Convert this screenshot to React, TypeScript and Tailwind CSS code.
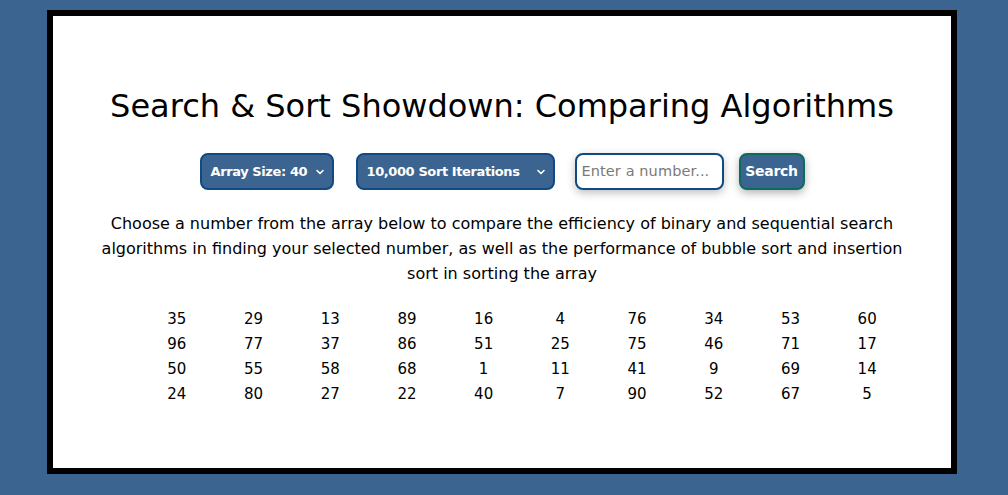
import React from "react";

const nums = [
  35, 29, 13, 89, 16, 4, 76, 34, 53, 60,
  96, 77, 37, 86, 51, 25, 75, 46, 71, 17,
  50, 55, 58, 68, 1, 11, 41, 9, 69, 14,
  24, 80, 27, 22, 40, 7, 90, 52, 67, 5,
];

function Chevron() {
  return (
    <svg width="10" height="10" viewBox="0 0 10 10" fill="none">
      <path d="M2 3.5 L5 6.5 L8 3.5" stroke="white" strokeWidth="1.6" strokeLinecap="round" strokeLinejoin="round" />
    </svg>
  );
}

export default function App() {
  return (
    <div
      className="w-[1008px] h-[495px] bg-[#3b6590] pt-[10px] pl-[47px]"
      style={{ fontFamily: '"DejaVu Sans", "Open Sans", sans-serif' }}
    >
      <div className="w-[910px] h-[464px] border-[6px] border-black bg-white flex flex-col items-center text-black">
        <h1 className="mt-[70px] text-[32px] leading-[40px] font-normal whitespace-nowrap">
          Search &amp; Sort Showdown: Comparing Algorithms
        </h1>
        <div className="mt-[27px] flex items-center h-[37px]">
          <div className="w-[134px] h-[37px] rounded-[8px] border-2 border-[#0f4a82] bg-[#3b6590] text-white font-bold text-[13px] flex items-center justify-between pl-[9px] pr-[7px] tracking-[-0.4px]">
            <span>Array Size: 40</span>
            <Chevron />
          </div>
          <div className="ml-[22px] w-[199px] h-[37px] rounded-[8px] border-2 border-[#0f4a82] bg-[#3b6590] text-white font-bold text-[13px] flex items-center justify-between pl-[9px] pr-[7px] tracking-[-0.4px]">
            <span>10,000 Sort Iterations</span>
            <Chevron />
          </div>
          <div className="ml-[20px] w-[149px] h-[37px] rounded-[8px] border-2 border-[#0f4a82] bg-white flex items-center pl-[5px] text-[14.5px] tracking-[0.1px] text-[#7a7a7a] shadow-[0_3px_8px_rgba(0,0,0,0.25)] whitespace-nowrap overflow-hidden">
            Enter a number...
          </div>
          <div className="ml-[15px] w-[66px] h-[37px] rounded-[8px] border-2 border-[#0d6b5c] bg-[#3b6590] text-white font-bold text-[14px] flex items-center justify-center tracking-[-0.3px] shadow-[0_3px_8px_rgba(0,0,0,0.3)]">
            Search
          </div>
        </div>
        <p className="mt-[21px] w-[840px] text-center text-[16px] leading-[25px] font-normal">
          Choose a number from the array below to compare the efficiency of binary and sequential search
          <br />
          algorithms in finding your selected number, as well as the performance of bubble sort and insertion
          <br />
          sort in sorting the array
        </p>
        <div className="mt-[21px] ml-[40px] grid grid-cols-10 w-[767px] text-[15px] leading-[25px] font-normal text-center">
          {nums.map((n, i) => (
            <div key={i}>{n}</div>
          ))}
        </div>
      </div>
    </div>
  );
}
